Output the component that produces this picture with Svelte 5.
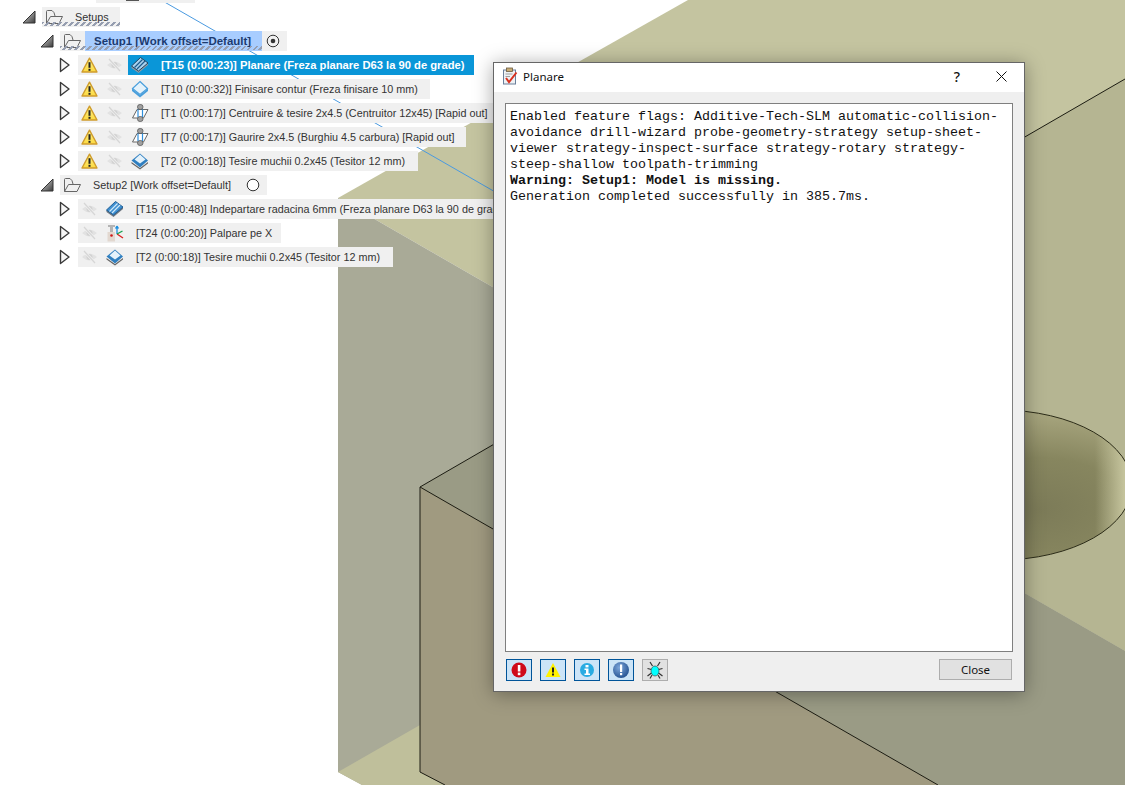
<script lang="ts">
    type Op = { label: string; width: number; warn: boolean; icon: string; selected?: boolean };

    const setup1: Op[] = [
        { label: "[T15 (0:00:23)] Planare (Freza planare D63 la 90 de grade)", width: 396, warn: true, icon: "stack", selected: true },
        { label: "[T10 (0:00:32)] Finisare contur (Freza finisare 10 mm)", width: 352, warn: true, icon: "diamond" },
        { label: "[T1 (0:00:17)] Centruire & tesire 2x4.5 (Centruitor 12x45) [Rapid out]", width: 420, warn: true, icon: "drill" },
        { label: "[T7 (0:00:17)] Gaurire 2x4.5 (Burghiu 4.5 carbura) [Rapid out]", width: 388, warn: true, icon: "drill" },
        { label: "[T2 (0:00:18)] Tesire muchii 0.2x45 (Tesitor 12 mm)", width: 340, warn: true, icon: "chamfer" },
    ];

    const setup2: Op[] = [
        { label: "[T15 (0:00:48)] Indepartare radacina 6mm (Freza planare D63 la 90 de grade)", width: 440, warn: false, icon: "stack" },
        { label: "[T24 (0:00:20)] Palpare pe X", width: 203, warn: false, icon: "probe" },
        { label: "[T2 (0:00:18)] Tesire muchii 0.2x45 (Tesitor 12 mm)", width: 315, warn: false, icon: "chamfer" },
    ];

    const flags = ["error", "warning", "info", "notice", "debug"];
</script>

{#snippet arrowDown()}
    <svg class="twist" width="14" height="14" viewBox="0 0 14 14">
        <defs>
            <linearGradient id="twistFill" x1="0" y1="0" x2="1" y2="1">
                <stop offset="0" stop-color="#e4e4e4" />
                <stop offset="1" stop-color="#3a3a3a" />
            </linearGradient>
        </defs>
        <path d="M1 13 L13 1 L13 13 Z" fill="url(#twistFill)" stroke="#333" stroke-width="1" />
    </svg>
{/snippet}

{#snippet folder()}
    <svg class="folder" width="20" height="18" viewBox="0 0 20 18">
        <path d="M2.5 15.5 L2.5 3.5 Q2.5 2.5 3.5 2.5 L8 2.5 Q10.5 4 11 8" fill="none" stroke="#666" stroke-width="1" />
        <path d="M2.5 15.5 L6.5 8.5 L18.5 8.5 L15 15.5 Z" fill="none" stroke="#666" stroke-width="1" />
    </svg>
{/snippet}

{#snippet warnIcon()}
    <svg class="ic" width="17" height="17" viewBox="0 0 17 17">
        <defs>
            <linearGradient id="warnFill" x1="0" y1="0" x2="0" y2="1">
                <stop offset="0" stop-color="#fff48c" />
                <stop offset="1" stop-color="#fcd93f" />
            </linearGradient>
        </defs>
        <path d="M8.5 1.2 L16 15 L1 15 Z" fill="url(#warnFill)" stroke="#cf9c2c" stroke-width="1.4" stroke-linejoin="round" />
        <rect x="7.5" y="5.2" width="2" height="5.6" fill="#222" />
        <rect x="7.5" y="11.8" width="2" height="2" fill="#222" />
    </svg>
{/snippet}

{#snippet eyeOff()}
    <svg class="ic" width="17" height="16" viewBox="0 0 17 16">
        <path d="M1 8 Q8.5 1 16 8 Q8.5 15 1 8 Z" fill="#e2e2e2" />
        <circle cx="8.5" cy="8" r="3" fill="#d2d2d2" />
        <path d="M3 2 L14 14" stroke="#f0f0f0" stroke-width="2.6" />
        <path d="M3 2 L14 14" stroke="#d6d6d6" stroke-width="1.3" />
    </svg>
{/snippet}

{#snippet opIcon(name, selected)}
    <svg class="ic" width="18" height="18" viewBox="0 0 18 18">
        {#if name === "stack"}
            <path d="M0.5 10 L0.5 12 L7.5 17 L17 9 L17 7 Z" fill={selected ? "#8d9aa4" : "#6d7680"} />
            <path d="M0.5 10 L9.5 1.5 L17 7 L7.5 15 Z" fill={selected ? "#a9d2ee" : "#3f8fd0"} stroke={selected ? "#20435f" : "#1f5f96"} stroke-width="1" />
            <path d="M3.5 11.5 L11.5 3.5 M6 13 L14 5" stroke={selected ? "#1c5c8c" : "#cfe8f9"} stroke-width="1.2" />
        {:else if name === "diamond"}
            <path d="M1 8.5 L1 11 L9 17.5 L17 11 L17 8.5 L9 15 Z" fill="#4a9fdc" />
            <path d="M9 1.5 L16.5 8.5 L9 14.5 L1.5 8.5 Z" fill="#e4f2fb" stroke="#4a9fdc" stroke-width="1.2" />
        {:else if name === "drill"}
            <path d="M1.5 14 L6 5.5 L17 5.5 L12.5 14 Z" fill="#fff" stroke="#666" stroke-width="1" />
            <rect x="6.5" y="0.5" width="5.5" height="5" rx="2.4" fill="#a0a0a0" stroke="#555" stroke-width="0.8" />
            <rect x="6.5" y="12.5" width="5.5" height="5" rx="2.4" fill="#a0a0a0" stroke="#555" stroke-width="0.8" />
            <path d="M7 5.5 L7 13 M11.5 5.5 L11.5 13" stroke="#2f8fdc" stroke-width="1.2" />
        {:else if name === "chamfer"}
            <path d="M0.5 10 L0.5 11.5 L9 17.5 L17 11.5 L17 10 L9 16 Z" fill="#666" />
            <path d="M9 1.5 L17 8.5 L9 15.5 L0.5 8.5 Z" fill="#2f7fc0" />
            <path d="M9 2.5 L14.5 7.5 L9 11.5 L3.5 7.5 Z" fill="#e4f2fb" />
        {:else if name === "probe"}
            <path d="M2 1 L9 1 L9 3 L7 3 L7 8 L4 8 L4 3 L2 3 Z" fill="#b4b4b4" />
            <rect x="1.5" y="8" width="7.5" height="9.5" fill="#e2d8d0" />
            <circle cx="5.5" cy="11.5" r="1.3" fill="#d01818" />
            <path d="M11 10 L11 2 M11 2 L9.5 4.5 M11 2 L12.5 4.5" stroke="#1c8fe0" stroke-width="1.3" fill="none" />
            <path d="M11 10 L17 14" stroke="#d82020" stroke-width="1.4" />
            <path d="M11 10 L16.5 7" stroke="#18a050" stroke-width="1.4" />
        {/if}
    </svg>
{/snippet}

{#snippet opRow(op)}
    <div class="op">
        <svg class="expand" width="12" height="16" viewBox="0 0 12 16">
            <path d="M1.5 1.5 L10 8 L1.5 14.5 Z" fill="#f6f6f6" stroke="#3a3a3a" stroke-width="1.4" stroke-linejoin="round" />
        </svg>
        <div class="op-bg" style="width: {op.width}px">
            {#if op.warn}
                <span class="slot state">{@render warnIcon()}</span>
            {/if}
            <span class="slot state">{@render eyeOff()}</span>
            <span class="body" class:selected={op.selected}>
                <span class="slot tool">{@render opIcon(op.icon, op.selected)}</span>
                <span class="label">{op.label}</span>
            </span>
        </div>
    </div>
{/snippet}

<div class="page">
    <svg class="scene" width="1125" height="785" viewBox="0 0 1125 785">
        <defs>
            <radialGradient id="hole" cx="0.65" cy="0.66" r="0.62">
                <stop offset="0" stop-color="#7c7b58" />
                <stop offset="0.55" stop-color="#87865f" />
                <stop offset="1" stop-color="#a5a37c" />
            </radialGradient>
            <linearGradient id="holeTip" x1="0" y1="0" x2="1" y2="0">
                <stop offset="0.86" stop-color="#c4c39c" stop-opacity="0" />
                <stop offset="0.97" stop-color="#c4c39c" />
            </linearGradient>
        </defs>
        <!-- far surface: lit, then in shadow -->
        <polygon points="338,198 688,0 1125,0 1125,651" fill="#c4c4a0" />
        <polygon points="338,198 1125,651 1125,785 362,785 338,772" fill="#a9aa97" />
        <polygon points="338,772 420,725 420,772 445,785 362,785" fill="#bfbf9b" />
        <!-- block top -->
        <polygon points="629,366 1125,79 1125,651" fill="#b5b592" />
        <polygon points="420,487 629,366 1125,651 1125,785 938,785" fill="#9a9b85" />
        <ellipse cx="1000" cy="485" rx="132" ry="75" fill="url(#hole)" />
        <ellipse cx="1000" cy="485" rx="132" ry="75" fill="url(#holeTip)" stroke="#2c2c18" stroke-width="1" />
        <!-- block front -->
        <polygon points="420,487 938,785 445,785 420,772" fill="#a09a80" />
        <path d="M1125 79 L420 487 L420 772 L445 785 M420 487 L938 785" fill="none" stroke="#1c1c12" stroke-width="1" />
        <path d="M161 0 L497 193" stroke="#4a9ae0" stroke-width="1" fill="none" />
    </svg>

    <div class="tree">
        <div class="sliver"></div>

        <div class="node level0">
            {@render arrowDown()}
            <div class="node-bg root">
                {@render folder()}
                <span class="node-label">Setups</span>
                <span class="stripes"></span>
            </div>
        </div>

        <div class="node level1">
            {@render arrowDown()}
            <div class="node-bg setup active">
                {@render folder()}
                <span class="node-sel">
                    <span class="node-label">Setup1 [Work offset=Default]</span>
                </span>
                <span class="stripes"></span>
                <svg class="radio" width="14" height="14" viewBox="0 0 14 14">
                    <circle cx="7" cy="7" r="5.8" fill="none" stroke="#333" stroke-width="1" />
                    <circle cx="7" cy="7" r="2.3" fill="#333" />
                </svg>
            </div>
        </div>

        {#each setup1 as op}
            {@render opRow(op)}
        {/each}

        <div class="node level1">
            {@render arrowDown()}
            <div class="node-bg setup plain">
                {@render folder()}
                <span class="node-label">Setup2 [Work offset=Default]</span>
                <svg class="radio" width="14" height="14" viewBox="0 0 14 14">
                    <circle cx="7" cy="7" r="5.8" fill="#fff" stroke="#333" stroke-width="1" />
                </svg>
            </div>
        </div>

        {#each setup2 as op}
            {@render opRow(op)}
        {/each}
    </div>

    <div class="dialog">
        <div class="titlebar">
            <svg width="16" height="18" viewBox="0 0 16 18">
                <rect x="1.5" y="3" width="12" height="14" fill="#eef1f4" stroke="#6a7f9a" stroke-width="1" />
                <rect x="4.5" y="1" width="6" height="3.5" fill="#c9ac74" stroke="#6a5a40" stroke-width="0.8" />
                <path d="M3.5 7 L10.5 7 M3.5 9.5 L8 9.5" stroke="#a0a0a0" stroke-width="1" />
                <path d="M4 11 L7 15 L14.5 5.5" fill="none" stroke="#d8301e" stroke-width="2" />
            </svg>
            <span class="title">Planare</span>
            <span class="help">?</span>
            <svg class="close-x" width="11" height="11" viewBox="0 0 11 11">
                <path d="M0.5 0.5 L10.5 10.5 M10.5 0.5 L0.5 10.5" stroke="#111" stroke-width="1" />
            </svg>
        </div>
        <div class="log">
            Enabled feature flags: Additive-Tech-SLM automatic-collision-avoidance drill-wizard probe-geometry-strategy setup-sheet-viewer strategy-inspect-surface strategy-rotary strategy-steep-shallow toolpath-trimming
            <br />
            <b>Warning: Setup1: Model is missing.</b>
            <br />
            Generation completed successfully in 385.7ms.
        </div>
        <div class="footer">
            {#each flags as flag}
                <button class="flag" class:off={flag === "debug"} aria-label={flag}>
                    <svg width="20" height="20" viewBox="0 0 20 20">
                        {#if flag === "error"}
                            <circle cx="10" cy="10" r="7.5" fill="#cf0a1a" />
                            <rect x="8.8" y="5" width="2.6" height="6.5" fill="#fff" />
                            <rect x="8.8" y="12.6" width="2.6" height="2.6" fill="#fff" />
                        {:else if flag === "warning"}
                            <path d="M10 3 L17.5 17 L2.5 17 Z" fill="#fff200" />
                            <rect x="9" y="7.5" width="2" height="5" fill="#222" />
                            <rect x="9" y="13.5" width="2" height="2" fill="#222" />
                        {:else if flag === "info"}
                            <circle cx="10" cy="10" r="7" fill="#29abe2" />
                            <rect x="8.5" y="5" width="3" height="2.4" fill="#fff" />
                            <path d="M7.5 8.5 L11.5 8.5 L11.5 13.5 L13 13.5 L13 15 L7.5 15 L7.5 13.5 L9 13.5 L9 10 L7.5 10 Z" fill="#fff" />
                        {:else if flag === "notice"}
                            <defs>
                                <radialGradient id="sphere" cx="0.4" cy="0.35" r="0.7">
                                    <stop offset="0" stop-color="#7fa8dc" />
                                    <stop offset="1" stop-color="#23508f" />
                                </radialGradient>
                            </defs>
                            <circle cx="10" cy="10" r="8" fill="url(#sphere)" />
                            <rect x="9" y="4.5" width="2.2" height="7.5" fill="#fff" />
                            <rect x="9" y="13" width="2.2" height="2.2" fill="#fff" />
                        {:else}
                            <path d="M5 2 L7.5 6 M15 2 L12.5 6 M2.5 8.5 L6.5 9.5 M17.5 8.5 L13.5 9.5 M2.5 16 L6.5 13 M17.5 16 L13.5 13 M5 18.5 L7 15 M15 18.5 L13 15" stroke="#333" stroke-width="1.2" />
                            <ellipse cx="10" cy="11" rx="4" ry="5" fill="#0ff" stroke="#333" stroke-width="0.6" />
                        {/if}
                    </svg>
                </button>
            {/each}
            <button class="close">Close</button>
        </div>
    </div>
</div>

<style>
    :global(body) {
        margin: 0;
        background: #fff;
    }

    .page {
        position: relative;
        width: 1125px;
        height: 785px;
        overflow: hidden;
        background: #fff;
        font-family: "Liberation Sans", Arial, sans-serif;
        font-size: 10.8px;
        color: #333;
    }

    .scene {
        position: absolute;
        left: 0;
        top: 0;
    }

    .tree {
        position: relative;
        display: flex;
        flex-direction: column;
        gap: 4px;
    }

    .sliver {
        width: 99px;
        height: 3px;
        margin-left: 96px;
        background: #f0f0f0;
    }

    .sliver::before {
        content: "";
        display: block;
        width: 13px;
        height: 1px;
        margin-left: 30px;
        background: #555;
    }

    .node {
        display: flex;
        align-items: center;
        height: 20px;
    }

    .node.level0 {
        padding-left: 22px;
    }

    .node.level1 {
        padding-left: 40px;
    }

    .node-bg {
        position: relative;
        display: flex;
        align-items: center;
        height: 20px;
        margin-left: 6px;
        background: #f0f0f0;
    }

    .node-bg.root {
        width: 78px;
    }

    .node-bg.setup {
        width: 227px;
    }

    .node-bg.plain {
        width: 207px;
    }

    .folder {
        margin-left: 2px;
        flex: none;
    }

    .node-label {
        white-space: nowrap;
    }

    .root .node-label,
    .plain .node-label {
        margin-left: 11px;
    }

    .node-sel {
        display: flex;
        align-items: center;
        width: 177px;
        height: 20px;
        margin-left: 3px;
        padding-left: 9px;
        box-sizing: border-box;
        background: #a8cdff;
    }

    .active .node-label {
        font-size: 11.45px;
        font-weight: bold;
        color: #1c3a6e;
    }

    .radio {
        flex: none;
        margin-left: auto;
        margin-right: 7px;
    }

    .stripes {
        position: absolute;
        left: 0;
        bottom: 1px;
        width: 100%;
        height: 4px;
        background: repeating-linear-gradient(135deg, #969eb0 0 2px, transparent 2px 4.2px);
    }

    .active .stripes {
        width: 202px;
    }

    .op {
        display: flex;
        align-items: center;
        height: 20px;
        padding-left: 59px;
    }

    .expand {
        flex: none;
        margin-right: 7px;
    }

    .op-bg {
        display: flex;
        align-items: center;
        height: 20px;
        background: #f0f0f0;
    }

    .slot {
        display: flex;
        align-items: center;
        justify-content: center;
        flex: none;
        height: 20px;
        box-sizing: border-box;
    }

    .state {
        width: 25px;
        padding-right: 3px;
    }

    .tool {
        width: 23px;
    }

    .body {
        display: flex;
        align-items: center;
        flex: 1;
        height: 20px;
        white-space: nowrap;
    }

    .label {
        margin-left: 10px;
    }

    .body.selected {
        background: #0a96d8;
    }

    .body.selected .label {
        font-size: 11.2px;
        font-weight: bold;
        color: #fff;
    }

    .dialog {
        position: absolute;
        left: 493px;
        top: 62px;
        width: 532px;
        height: 630px;
        box-sizing: border-box;
        display: flex;
        flex-direction: column;
        background: #efefef;
        border: 1px solid #666;
        box-shadow: 0 2px 18px rgba(0, 0, 0, 0.35);
    }

    .titlebar {
        display: flex;
        align-items: center;
        flex: none;
        height: 29px;
        box-sizing: border-box;
        padding: 0 17px 3px 8px;
        background: #fff;
        font-family: "Noto Sans", sans-serif;
        font-size: 11.5px;
        color: #111;
    }

    .title {
        margin-left: 5px;
        flex: 1;
    }

    .help {
        margin-right: 36px;
        font-size: 14px;
        font-weight: 500;
    }

    .log {
        flex: 1;
        margin: 11px 11px 0;
        padding: 5px 4px 0 4px;
        background: #fff;
        border: 1px solid #7f7f7f;
        font-family: "Liberation Mono", monospace;
        font-size: 13.33px;
        line-height: 16px;
        color: #111;
    }

    .footer {
        display: flex;
        align-items: flex-start;
        flex: none;
        gap: 8px;
        height: 22px;
        padding: 7px 12px 10px 12px;
    }

    button {
        box-sizing: border-box;
        padding: 0;
        cursor: pointer;
    }

    .flag {
        display: flex;
        align-items: center;
        justify-content: center;
        width: 26px;
        height: 22px;
        background: #cce4f7;
        border: 1px solid #005499;
    }

    .flag.off {
        background: #e1e1e1;
        border-color: #adadad;
    }

    .close {
        width: 73px;
        height: 21px;
        margin-left: auto;
        background: #e1e1e1;
        border: 1px solid #adadad;
        font-family: "Noto Sans", sans-serif;
        font-size: 11.5px;
        color: #111;
    }
</style>
